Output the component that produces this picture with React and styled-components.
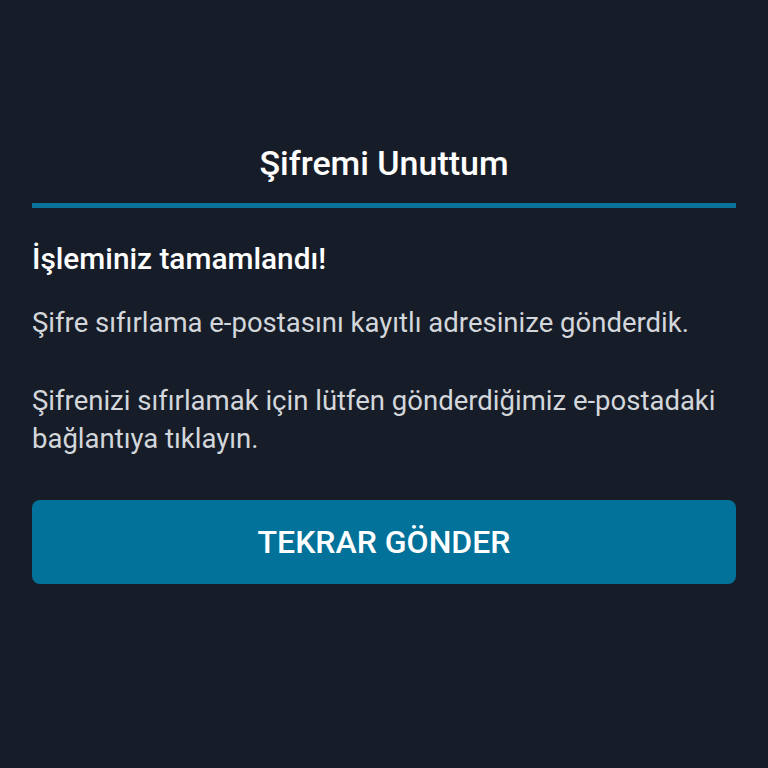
import React from "react";
import styled, { createGlobalStyle } from "styled-components";

const GlobalStyle = createGlobalStyle`
  html, body {
    margin: 0;
    padding: 0;
    background: #171d28;
  }
  body {
    font-family: Roboto, "Noto Sans", sans-serif;
    -webkit-font-smoothing: antialiased;
  }
`;

const Screen = styled.div`
  width: 768px;
  height: 768px;
  background: #171d28;
  box-sizing: border-box;
  padding: 143px 32px 0;
`;

const Title = styled.h1`
  margin: 0;
  text-align: center;
  color: #ffffff;
  font-size: 34px;
  font-weight: 500;
  line-height: 40px;
`;

const Divider = styled.div`
  height: 5px;
  background: #0a7399;
  margin-top: 20px;
`;

const Heading = styled.h2`
  margin: 33px 0 0;
  color: #ffffff;
  font-size: 29.8px;
  font-weight: 500;
  line-height: 36px;
`;

const Message = styled.p`
  margin: ${(p) => p.$top}px 0 0;
  color: #d3d6db;
  font-size: 27.5px;
  font-weight: 400;
  line-height: 38px;
`;

const Button = styled.button`
  display: block;
  width: 100%;
  height: 84px;
  margin-top: 42px;
  border: none;
  border-radius: 8px;
  background: #03729a;
  color: #ffffff;
  font-family: Roboto, "Noto Sans", sans-serif;
  font-size: 32px;
  font-weight: 500;
`;

export default function App() {
  return (
    <>
      <GlobalStyle />
      <Screen>
        <Title>Şifremi Unuttum</Title>
        <Divider />
        <Heading>İşleminiz tamamlandı!</Heading>
        <Message $top={27}>
          Şifre sıfırlama e-postasını kayıtlı adresinize gönderdik.
        </Message>
        <Message $top={40}>
          Şifrenizi sıfırlamak için lütfen gönderdiğimiz e-postadaki
          bağlantıya tıklayın.
        </Message>
        <Button>TEKRAR GÖNDER</Button>
      </Screen>
    </>
  );
}
